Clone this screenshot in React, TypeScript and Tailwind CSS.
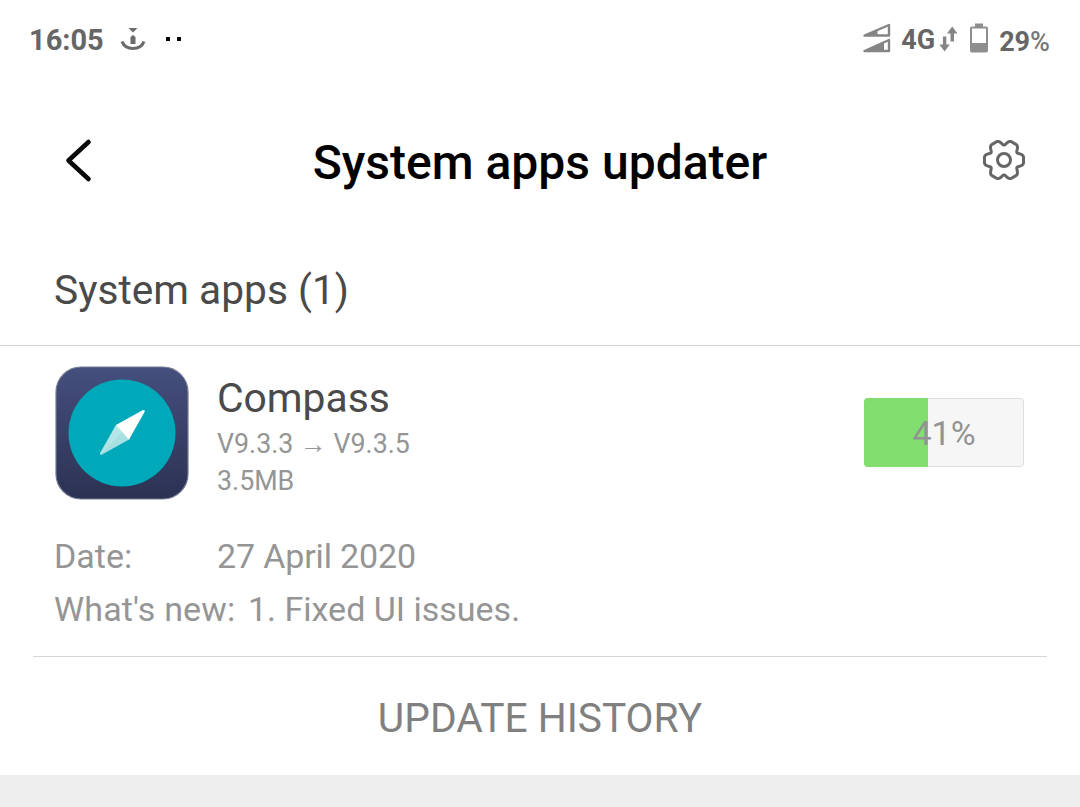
interface InfoRowProps {
  label: string;
  value: string;
  labelClassName: string;
  valueClassName?: string;
}

// Six-lobed outline of the settings gear, centred on 0,0
const GEAR_PATH =
  Array.from({ length: 120 }, (_, i) => {
    const a = (i / 120) * Math.PI * 2;
    const r = 18.1 + 2.3 * Math.cos(6 * a) - 0.9 * Math.cos(12 * a);
    return `${i === 0 ? "M" : "L"}${(r * Math.cos(a)).toFixed(2)} ${(r * Math.sin(a)).toFixed(2)}`;
  }).join(" ") + "Z";

function AnchorIcon() {
  return (
    <svg className="ml-[16px] h-[26px] w-[26px] text-[#6b6b6b]" viewBox="0 0 26 26" fill="none">
      <path d="M8.500 1H17.500L13 5.500Z" fill="currentColor" />
      <path d="M10.500 17V10L13 8L15.500 10V17Z" fill="currentColor" />
      <path
        d="M2 14.500C4 19.500 8 21.500 13 21.500S22 19.500 24 14.500"
        stroke="currentColor"
        strokeWidth="3.200"
      />
    </svg>
  );
}

function SignalIcon() {
  return (
    <svg className="-mr-px mb-[4px] ml-px h-[30px] w-[28px] text-[#858585]" viewBox="0 0 28 30" fill="none">
      <path d="M1.500 12.500L26 2V12.500Z" stroke="currentColor" strokeWidth="2.400" strokeLinejoin="round" />
      <path d="M1.500 12.500L14.500 7V12.500Z" fill="currentColor" />
      <path d="M1.500 28L26 17V28Z" stroke="currentColor" strokeWidth="2.400" strokeLinejoin="round" />
      <path d="M1.500 28L21 19V28Z" fill="currentColor" />
    </svg>
  );
}

function DataArrowsIcon() {
  return (
    <svg className="mb-[2px] ml-[4px] h-[26px] w-[19px] text-[#858585]" viewBox="0 0 19 26" fill="currentColor">
      <path d="M3.900 10.500H7.300V18.500H10.800L5.600 25.500L0.400 18.500H3.900Z" />
      <path d="M11.500 15.500V7.500H8L13.200 0.500L18.500 7.500H15V15.500Z" />
    </svg>
  );
}

function BatteryIcon() {
  return (
    <svg className="mb-[4px] ml-[11px] h-[30px] w-[20px] text-[#8e8e8e]" viewBox="0 0 20 30" fill="none">
      <rect x="6" y="0.500" width="8" height="4" fill="currentColor" />
      <rect x="2" y="4.500" width="16" height="24" rx="1" stroke="currentColor" strokeWidth="2" />
      <rect x="2" y="20" width="16" height="8.500" fill="currentColor" />
    </svg>
  );
}

function CompassIcon() {
  return (
    <svg className="h-[134px] w-[134px] shrink-0" viewBox="0 0 134 134">
      <defs>
        <linearGradient id="case" x1="0" y1="0" x2="0" y2="1">
          <stop offset="0" stopColor="#454f7d" />
          <stop offset="1" stopColor="#2b3253" />
        </linearGradient>
      </defs>
      <rect x="1" y="1" width="132" height="132" rx="25" fill="url(#case)" stroke="#737b91" strokeWidth="1.200" />
      <circle cx="67" cy="67" r="53.500" fill="#00a9ba" />
      <path d="M61 59L45 87Q44.500 89.500 47 88.500L75 73Z" fill="#a6e0e3" />
      <path d="M61 59L68 65.500L46 88Z" fill="#b4e6e7" />
      <path d="M61 59L88 44Q90.500 43.500 89.500 46L74 73.500Z" fill="#fff" />
    </svg>
  );
}

function StatusBar() {
  return (
    <div className="flex h-20 items-center justify-between pr-[30px] pl-[29px]">
      <div className="flex items-center">
        <span className="text-[29px] leading-none font-bold text-[#666]">16:05</span>
        <AnchorIcon />
        <div className="mb-[2px] ml-[20px] flex gap-[7px]">
          <span className="size-[4px] bg-black" />
          <span className="size-[4px] bg-black" />
        </div>
      </div>
      <div className="flex items-center">
        <SignalIcon />
        <span className="ml-[11px] text-[27px] leading-none font-bold text-[#666]">4G</span>
        <DataArrowsIcon />
        <BatteryIcon />
        <span className="mt-[4px] ml-[10px] text-[27px] leading-none font-bold text-[#666]">
          29<span className="font-medium text-[#777]">%</span>
        </span>
      </div>
    </div>
  );
}

function Header() {
  return (
    <header className="flex h-[164px] items-center justify-between pr-[53px] pl-[63px]">
      <button className="-mt-[3px]">
        <svg className="h-[46px] w-[30px]" viewBox="0 0 30 46" fill="none">
          <path d="M25.500 4L5.500 22.500L25.500 41" stroke="#0a0a0a" strokeWidth="4.600" strokeLinecap="round" strokeLinejoin="round" />
        </svg>
      </button>
      <h1 className="mt-[2px] ml-[6px] text-[48px] leading-none font-medium text-black">System apps updater</h1>
      <button className="-mt-1">
        <svg className="h-[46px] w-[46px]" viewBox="-23 -23 46 46" fill="none" stroke="#666" strokeWidth="3">
          <path d={GEAR_PATH} strokeLinejoin="round" />
          <circle r="6.500" />
        </svg>
      </button>
    </header>
  );
}

function ProgressButton({ percent }: { percent: number }) {
  return (
    <button className="relative h-[69px] w-[160px] overflow-hidden rounded-[4px] bg-[#f6f6f6]">
      <span className="absolute inset-0 rounded-[4px] border border-[#dedede]" />
      <span className="absolute inset-y-0 left-0 w-[64px] bg-[#82df6f]" />
      <span className="relative top-px text-[34px] leading-none text-[#939393]">{percent}%</span>
    </button>
  );
}

function InfoRow({ label, value, labelClassName, valueClassName }: InfoRowProps) {
  return (
    <div className="flex h-[53px] items-center text-[34px] leading-none whitespace-pre text-[#959595]">
      <span className={labelClassName}>{label}</span>
      <span className={valueClassName}>{value}</span>
    </div>
  );
}

export default function App() {
  return (
    <div className="flex h-[807px] w-[1080px] flex-col overflow-hidden bg-white font-['Roboto',sans-serif]">
      <StatusBar />
      <Header />

      <h2 className="flex h-[102px] items-center border-b border-[#d2d2d2] pb-[9px] pl-[54px] text-[40.7px] leading-none text-[#4a4a4a]">
        System apps (1)
      </h2>

      <div className="flex h-[183px] pt-[20px] pr-[56px] pl-[55px]">
        <CompassIcon />
        <div className="ml-[28px] flex-1 pt-[8px]">
          <div className="h-[50px] text-[40.8px] leading-[48px] text-[#4a4a4a]">Compass</div>
          <div className="h-[37px] text-[26.8px] leading-[40px] text-[#959595]">V9.3.3 → V9.3.5</div>
          <div className="h-[37px] text-[26.8px] leading-[40px] text-[#959595]">3.5MB</div>
        </div>
        <div className="pt-[32px]">
          <ProgressButton percent={41} />
        </div>
      </div>

      <div className="h-[127px] pl-[54px]">
        <InfoRow
          label="Date:"
          value="27 April 2020"
          labelClassName="w-[163px]"
          valueClassName="tracking-[-0.15px]"
        />
        <InfoRow label="What's new:" value="1. Fixed UI issues." labelClassName="w-[194px] tracking-[0.15px]" />
      </div>

      <div className="mx-[33px] h-px shrink-0 bg-[#d6d6d6]" />
      <button className="flex h-[118px] items-center justify-center pt-[5px] text-[40.7px] leading-none text-[#808080]">
        UPDATE HISTORY
      </button>
      <div className="flex-1 bg-[#eee]" />
    </div>
  );
}
